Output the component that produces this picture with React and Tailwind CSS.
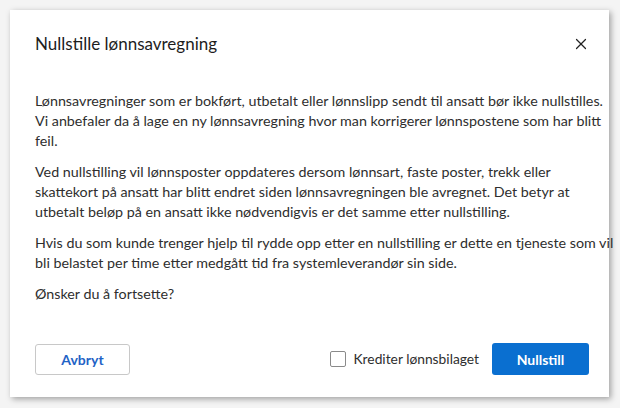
import { X } from 'lucide-react'

const paragraphs = [
  ['Lønnsavregninger som er bokført, utbetalt eller lønnslipp sendt til ansatt bør ikke nullstilles.', 'Vi anbefaler da å lage en ny lønnsavregning hvor man korrigerer lønnspostene som har blitt', 'feil.'],
  ['Ved nullstilling vil lønnsposter oppdateres dersom lønnsart, faste poster, trekk eller', 'skattekort på ansatt har blitt endret siden lønnsavregningen ble avregnet. Det betyr at', 'utbetalt beløp på en ansatt ikke nødvendigvis er det samme etter nullstilling.'],
  ['Hvis du som kunde trenger hjelp til rydde opp etter en nullstilling er dette en tjeneste som vil', 'bli belastet per time etter medgått tid fra systemleverandør sin side.'],
  ['Ønsker du å fortsette?'],
]

const App = () => {
  return (
    <div className="min-h-[408px] w-[620px] bg-[#f4f4f4] p-[10px] pr-[11px] pb-[11px] font-['Lato',sans-serif]">
      <div className="flex flex-col bg-white shadow-[2px_2px_6px_rgba(0,0,0,0.35)] h-[387px]">
        <header className="flex items-center justify-between pl-[25px] pr-[19px] pt-[22px]">
          <h1 className="text-[17px] text-[#1d1d1d] leading-[24px]">Nullstille lønnsavregning</h1>
          <button className="text-[#222]">
            <X size={18} strokeWidth={1.6} />
          </button>
        </header>

        <div className="flex flex-col gap-[11px] px-[25px] pt-[35px] text-[14.3px] leading-[20px] text-[#2e2e2e]">
          {paragraphs.map((lines, idx) => (
            <p key={idx}>
              {lines.map((line, i) => (
                <span key={i} className="block whitespace-nowrap">{line}</span>
              ))}
            </p>
          ))}
        </div>

        <footer className="mt-auto flex items-center justify-between pl-[25px] pr-[20px] pb-[22px]">
          <button className="w-[95px] h-[31px] rounded-[3px] border border-[#c8c8c8] text-[14px] font-bold text-[#1f63c6]">
            Avbryt
          </button>
          <div className="flex items-center gap-[13px]">
            <label className="flex items-center gap-[7px] text-[13.8px] text-[#2e2e2e]">
              <span className="w-[16px] h-[16px] rounded-[2px] border border-[#8a8a8a] bg-white" />
              Krediter lønnsbilaget
            </label>
            <button className="w-[97px] h-[32px] rounded-[3px] bg-[#0a6fd0] text-[14px] font-bold text-white">
              Nullstill
            </button>
          </div>
        </footer>
      </div>
    </div>
  )
}

export default App
